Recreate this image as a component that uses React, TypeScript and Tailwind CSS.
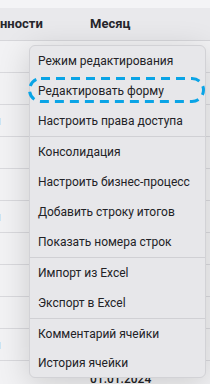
import type { ReactNode } from 'react';

const ROWS = 11;

const GROUPS: string[][] = [
  ['Режим редактирования', 'Редактировать форму', 'Настроить права доступа'],
  ['Консолидация', 'Настроить бизнес-процесс', 'Добавить строку итогов', 'Показать номера строк'],
  ['Импорт из Excel', 'Экспорт в Excel'],
  ['Комментарий ячейки', 'История ячейки'],
];

// rows that show the clipped tail of the first column's text
const TAIL_ROWS = [2, 5, 9];

export default function App() {
  return (
    <div
      className="relative h-[384px] w-[210px] overflow-hidden bg-[#f2f2f4] text-[#1f1f23]"
      style={{ fontFamily: 'Roboto, "Noto Sans", sans-serif' }}
    >
      <div className="h-2 bg-[#f4f4f6]" />
      <div className="flex h-[33px] items-center border-b border-[#d6d6da] bg-[#e9e9ec] text-[13px] font-bold text-[#26262b]">
        <div className="w-[90px] shrink-0">нности</div>
        <div>Месяц</div>
      </div>

      {Array.from({ length: ROWS }).map((_, i) => (
        <Row key={i} tail={TAIL_ROWS.includes(i)} date={i === ROWS - 1 ? '01.01.2024' : ''} />
      ))}

      <ContextMenu />
    </div>
  );
}

function Row(props: { tail: boolean; date: string }) {
  return (
    <div className="flex h-8 shrink-0 border-b border-[#d9d9dd] text-[12px] text-[#2a2a2e]">
      <div className="flex w-[90px] shrink-0 items-center overflow-hidden">
        {props.tail && <span className="-ml-[6px] text-[#8a8a90]">н</span>}
      </div>
      <div className="pt-[10px] text-[12px] leading-[16px] font-medium text-[#222226]">{props.date}</div>
    </div>
  );
}

function ContextMenu() {
  return (
    <div className="absolute left-[29px] top-[45px] w-[177px] rounded-[6px] border border-[#d2d2d6] bg-[#e7e7ea] shadow-[0_6px_32px_rgba(0,0,0,0.16)]">
      {GROUPS.map((group, gi) => (
        <div key={gi} className={gi > 0 ? 'border-t border-[#d0d0d4]' : ''}>
          {group.map((label) => (
            <MenuItem key={label} highlight={label === 'Редактировать форму'} last={label === 'История ячейки'}>
              {label}
            </MenuItem>
          ))}
        </div>
      ))}
    </div>
  );
}

function MenuItem(props: { children: ReactNode; highlight?: boolean; last?: boolean }) {
  return (
    <div
      className={
        'relative flex items-center whitespace-nowrap px-2 text-[12px] leading-none text-[#222226] ' +
        (props.last ? 'h-[28px] pb-[1px]' : 'h-[30px]')
      }
    >
      {props.children}
      {props.highlight && (
        <svg className="absolute -left-[2px] top-[1px] h-[26px] w-[177px]" viewBox="0 0 177 26" fill="none">
          <rect x="1.5" y="1.5" width="174" height="23" rx="11.5" stroke="#0aa4e6" strokeWidth="3" strokeDasharray="9 6" />
        </svg>
      )}
    </div>
  );
}
